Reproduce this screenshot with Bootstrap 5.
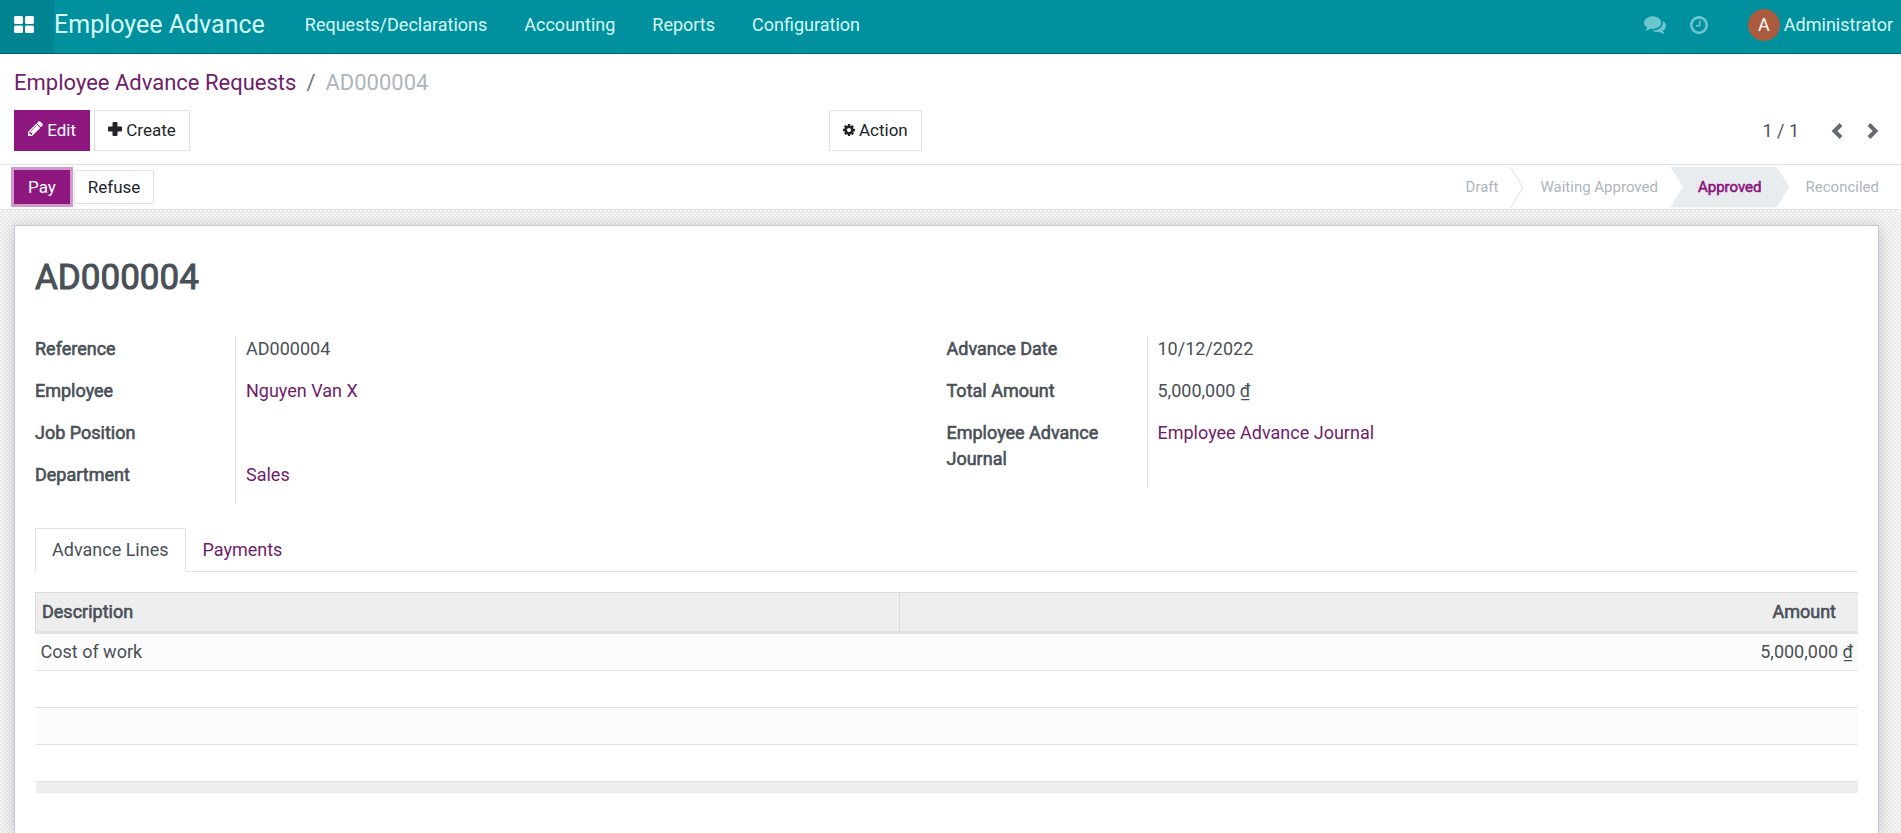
<!DOCTYPE html>
<html lang="en">
<head>
<meta charset="utf-8">
<meta name="viewport" content="width=device-width, initial-scale=1">
<title>Employee Advance - AD000004</title>
<link href="https://cdn.jsdelivr.net/npm/bootstrap@5.3.0/dist/css/bootstrap.min.css" rel="stylesheet">
<style>
  :root { --brand: #00909e; --plum: #8d177f; --plum-link: #6f1d6a; --ink: #495057; --line: #dee2e6; }
  body { font-family: Roboto, "Liberation Sans", sans-serif; font-size: 18px; line-height: 26px; color: var(--ink); min-height: 100vh; }
  a { color: var(--plum-link); text-decoration: none; }
  a:hover { color: var(--plum); }
  h1 { font-size: 35px; line-height: 42px; font-weight: 400; margin-bottom: 37px; -webkit-text-stroke: 1px currentColor; }
  .strong-text { font-weight: 400; -webkit-text-stroke: 0.6px currentColor; }

  .main-nav { background: var(--brand); border-bottom: 1px solid #00676f; height: 54px; padding-bottom: 4px; }
  .main-nav a { color: #d5fcfd; }
  .apps-btn { background: #008491; width: 54px; height: 53px; margin-bottom: -4px; padding: 0 0 5px 14px; }
  .app-name { font-size: 25px; line-height: 30px; padding-right: 40px; }
  .menu-gap { gap: 37px; }
  .tray-icon { opacity: .5; }
  .user-initial { width: 32px; height: 32px; background: #ac5c3e; color: #fff; }

  .page-trail { font-size: 22px; line-height: 30px; --bs-breadcrumb-divider-color: #6c757d; --bs-breadcrumb-item-padding-x: 10px; }
  .page-trail .breadcrumb-item.active { color: #adb5bd; }
  .control-panel { border-bottom: 1px solid var(--line); padding: 14px 14px 13px; }
  .tools-left { flex: 0 0 43.5%; }
  .tool-btn { --bs-btn-border-radius: 0; --bs-btn-font-size: 17px; --bs-btn-line-height: 25px; --bs-btn-padding-x: 13px; --bs-btn-padding-y: 7px; }
  .tool-btn svg { vertical-align: baseline; }
  .state-btn { --bs-btn-padding-y: 3px; --bs-btn-line-height: 26px; }
  .btn-plum { --bs-btn-color: #fff; --bs-btn-bg: var(--plum); --bs-btn-border-color: var(--plum); --bs-btn-hover-color: #fff; --bs-btn-hover-bg: #74136a; }
  .btn-plain { --bs-btn-color: #212529; --bs-btn-bg: #fff; --bs-btn-border-color: var(--line); --bs-btn-hover-bg: #f1f3f5; }
  .halo { box-shadow: 0 0 0 3px #cf9acb; z-index: 1; }

  .state-bar { border-bottom: 1px solid var(--line); padding-left: 14px; margin-right: 2px; height: 45px; }
  .steps { font-size: 15px; line-height: 41px; color: #adb5bd; padding-right: 20px; }
  .step-current { background: #e9ecef; color: var(--plum); height: 41px; padding: 0 28px; clip-path: polygon(0 0, calc(100% - 13px) 0, 100% 50%, calc(100% - 13px) 100%, 0 100%, 13px 50%); }

  .sheet-area { flex: 1; padding: 15px 22px 0 14px; background: conic-gradient(#e9e9e9 25%, #f6f6f6 0 50%, #e9e9e9 0 75%, #f6f6f6 0) 0 0 / 4px 4px; }
  .record-sheet { border: 1px solid #c8c8d3; border-bottom: 0; box-shadow: 0 2px 14px rgba(0, 0, 0, .18); padding: 31px 20px 0; flex: 1; }
  .field-group dt { width: 200px; padding-right: 40px; }
  .field-group dd { border-left: 1px solid var(--line); padding-left: 10px; }
  .field-group dt, .field-group dd { margin: 0; padding-bottom: 16px; min-height: 42px; }

  .nav-tabs { margin-top: 24px; --bs-nav-tabs-border-radius: 0; --bs-nav-link-padding-x: 16px; --bs-nav-link-padding-y: 8px; --bs-nav-tabs-link-active-color: var(--ink); --bs-nav-link-color: var(--plum-link); --bs-nav-tabs-border-width: 1px; }
  .lines-table { margin-top: 20px; color: var(--ink); border-color: var(--line); }
  .lines-table > :not(caption) > * > * { padding: 5px; }
  .lines-table thead th { background: #eee; border: 1px solid #d8dce0; border-bottom: 3px solid var(--line); border-right: 0; padding: 6px; }
  .lines-table thead th:first-child { width: 47.4%; }
  .lines-table thead th:last-child { padding-right: 22px; }
  .lines-table tbody tr { height: 37px; }
  .lines-table tbody tr:nth-child(odd) { background: #fcfcfc; }
  .lines-table tfoot td { background: #eee; height: 11px; padding: 0; border: 0; }
</style>
</head>
<body class="d-flex flex-column">

<header class="main-nav d-flex align-items-center">
  <a href="#" class="apps-btn d-flex align-items-center" aria-label="Applications">
    <svg width="20" height="17" viewBox="0 0 20 17" fill="#fff"><rect width="9" height="8" rx="1.5"/><rect x="11" width="9" height="8" rx="1.5"/><rect y="9.500" width="9" height="7.500" rx="1.500"/><rect x="11" y="9.500" width="9" height="7.500" rx="1.500"/></svg>
  </a>
  <a href="#" class="app-name">Employee Advance</a>
  <nav class="d-flex menu-gap">
    <a href="#">Requests/Declarations</a>
    <a href="#">Accounting</a>
    <a href="#">Reports</a>
    <a href="#">Configuration</a>
  </nav>
  <div class="d-flex align-items-center ms-auto pe-2">
    <a href="#" class="tray-icon d-flex me-4" aria-label="Conversations">
      <svg width="22" height="18" viewBox="0 0 1792 1408" fill="currentColor"><path d="M1408 512q0 139-94 257t-256.500 186.500-353.500 68.500q-86 0-176-16-124 88-278 128-36 9-86 16h-3q-11 0-20.500-8t-11.500-21q-1-3-1-6.500t.5-6.500 2-6l2.500-5 3.500-5.500 4-5 4.500-5 4-4.500q5-6 23-25t26-29.500 22.500-29 25-38.500 20.500-44q-124-72-195-177t-71-224q0-139 94-257t256.500-186.500 353.500-68.500 353.500 68.500 256.500 186.500 94 257zm384 256q0 120-71 224.500t-195 176.500q10 24 20.500 44t25 38.500 22.500 29 26 29.500 23 25q1 1 4 4.500t4.500 5 4 5 3.500 5.500l2.500 5 2 6 .5 6.500-1 6.500q-3 14-13 22t-22 7q-50-7-86-16-154-40-278-128-90 16-176 16-271 0-472-132 58 4 88 4 161 0 309-45t264-129q125-92 192-212t67-254q0-77-23-152 129 71 204 178t75 230z"/></svg>
    </a>
    <a href="#" class="tray-icon d-flex me-4" aria-label="Activities">
      <svg width="18" height="18" viewBox="0 0 1536 1536" fill="currentColor"><path d="M896 416v448q0 14-9 23t-23 9h-320q-14 0-23-9t-9-23v-64q0-14 9-23t23-9h224v-352q0-14 9-23t23-9h64q14 0 23 9t9 23zm416 352q0-148-73-273t-198-198-273-73-273 73-198 198-73 273 73 273 198 198 273 73 273-73 198-198 73-273zm224 0q0 209-103 385.500t-279.500 279.500-385.500 103-385.500-103-279.500-279.500-103-385.500 103-385.500 279.500-279.500 385.500-103 385.500 103 279.500 279.500 103 385.500z"/></svg>
    </a>
    <a href="#" class="d-flex align-items-center gap-1 ms-3"><span class="user-initial rounded-circle d-flex align-items-center justify-content-center">A</span>Administrator</a>
  </div>
</header>

<section class="control-panel">
  <ol class="breadcrumb page-trail mb-0">
    <li class="breadcrumb-item"><a href="#">Employee Advance Requests</a></li>
    <li class="breadcrumb-item active" aria-current="page">AD000004</li>
  </ol>
  <div class="row g-0 align-items-center pt-2 mt-1">
    <div class="tools-left d-flex gap-1">
      <button type="button" class="btn tool-btn btn-plum"><svg width="15" height="15" viewBox="0 0 1536 1536" fill="currentColor"><path d="M363 1408l91-91-235-235-91 91v107h128v128h107zm523-928q0-22-22-22-10 0-17 7l-542 542q-7 7-7 17 0 22 22 22 10 0 17-7l542-542q7-7 7-17zm-54-192l416 416-832 832h-416v-416zm683 96q0 53-37 90l-166 166-416-416 166-165q36-38 90-38 53 0 91 38l235 234q37 39 37 91z"/></svg> Edit</button>
      <button type="button" class="btn tool-btn btn-plain"><svg width="14" height="14" viewBox="0 0 14 14" fill="currentColor"><path d="M5.500 0h3q1 0 1 1v3.500H13q1 0 1 1v3q0 1-1 1H9.500V13q0 1-1 1h-3q-1 0-1-1V9.500H1q-1 0-1-1v-3q0-1 1-1h3.500V1q0-1 1-1z"/></svg> Create</button>
    </div>
    <div class="col-auto"><button type="button" class="btn tool-btn btn-plain"><svg width="12" height="12" viewBox="0 0 1536 1536" fill="currentColor"><path d="M1024 768q0-106-75-181t-181-75-181 75-75 181 75 181 181 75 181-75 75-181zm512-109v222q0 12-8 23t-20 13l-185 28q-19 54-39 91 35 50 107 138 10 12 10 25t-9 23q-27 37-99 108t-94 71q-12 0-26-9l-138-108q-44 23-91 38-16 136-29 186-7 28-36 28h-222q-14 0-24.500-8.500t-11.500-21.500l-28-184q-49-16-90-37l-141 107q-10 9-25 9-14 0-25-11-126-114-165-168-7-10-7-23 0-12 8-23 15-21 51-66.500t54-70.500q-27-50-41-99l-183-27q-13-2-21-12.500t-8-23.500v-222q0-12 8-23t19-13l186-28q14-46 39-92-40-57-107-138-10-12-10-24 0-10 9-23 26-36 98.500-107.500t94.500-71.500q13 0 26 10l138 107q44-23 91-38 16-136 29-186 7-28 36-28h222q14 0 24.500 8.500t11.500 21.500l28 184q49 16 90 37l142-107q9-9 24-9 13 0 25 10 129 119 165 170 7 8 7 22 0 12-8 23-15 21-51 66.500t-54 70.500q26 50 41 98l183 28q13 2 21 12.500t8 23.500z"/></svg> Action</button></div>
    <div class="col d-flex justify-content-end align-items-center">
      <span class="me-4 pe-1">1 / 1</span>
      <button type="button" class="btn p-0 border-0 d-flex me-4 ms-1" aria-label="Previous"><svg width="12" height="16" viewBox="0 0 12 16" fill="none" stroke="#666a6e" stroke-width="4"><path d="M10 1.500 3.500 8 10 14.500"/></svg></button>
      <button type="button" class="btn p-0 border-0 d-flex me-2" aria-label="Next"><svg width="12" height="16" viewBox="0 0 12 16" fill="none" stroke="#666a6e" stroke-width="4"><path d="M2 1.500 8.500 8 2 14.500"/></svg></button>
    </div>
  </div>
</section>

<section class="state-bar d-flex align-items-center">
  <button type="button" class="btn tool-btn state-btn btn-plum halo position-relative">Pay</button>
  <button type="button" class="btn tool-btn state-btn btn-plain ms-1">Refuse</button>
  <div class="steps d-flex align-items-center ms-auto">
    <span class="pe-2 me-1">Draft</span>
    <svg width="14" height="41" viewBox="0 0 14 41" fill="none" stroke="#dee2e6"><path d="M.5 0 13 20.500.5 41"/></svg>
    <span class="ps-3 pe-2 me-1">Waiting Approved</span>
    <span class="step-current strong-text">Approved</span>
    <span class="ps-3">Reconciled</span>
  </div>
</section>

<main class="sheet-area d-flex flex-column">
  <article class="record-sheet bg-white">
    <h1>AD000004</h1>
    <div class="row g-0 align-items-start">
      <div class="col-6 field-group">
        <dl class="m-0">
          <div class="d-flex"><dt class="strong-text">Reference</dt><dd>AD000004</dd></div>
          <div class="d-flex"><dt class="strong-text">Employee</dt><dd><a href="#">Nguyen Van X</a></dd></div>
          <div class="d-flex"><dt class="strong-text">Job Position</dt><dd></dd></div>
          <div class="d-flex"><dt class="strong-text">Department</dt><dd><a href="#">Sales</a></dd></div>
        </dl>
      </div>
      <div class="col-6 field-group">
        <dl class="m-0">
          <div class="d-flex"><dt class="strong-text">Advance Date</dt><dd>10/12/2022</dd></div>
          <div class="d-flex"><dt class="strong-text">Total Amount</dt><dd>5,000,000 ₫</dd></div>
          <div class="d-flex"><dt class="strong-text">Employee Advance Journal</dt><dd><a href="#">Employee Advance Journal</a></dd></div>
        </dl>
      </div>
    </div>
    <ul class="nav nav-tabs">
      <li class="nav-item"><a class="nav-link active" href="#" aria-current="page">Advance Lines</a></li>
      <li class="nav-item"><a class="nav-link" href="#">Payments</a></li>
    </ul>
    <table class="table lines-table mb-0">
      <thead>
        <tr><th class="strong-text" scope="col">Description</th><th class="strong-text text-end" scope="col">Amount</th></tr>
      </thead>
      <tbody>
        <tr><td>Cost of work</td><td class="text-end">5,000,000 ₫</td></tr>
        <tr><td colspan="2"></td></tr>
        <tr><td colspan="2"></td></tr>
        <tr><td colspan="2"></td></tr>
      </tbody>
      <tfoot><tr><td colspan="2"></td></tr></tfoot>
    </table>
  </article>
</main>

<script src="https://cdn.jsdelivr.net/npm/bootstrap@5.3.0/dist/js/bootstrap.bundle.min.js"></script>
</body>
</html>
